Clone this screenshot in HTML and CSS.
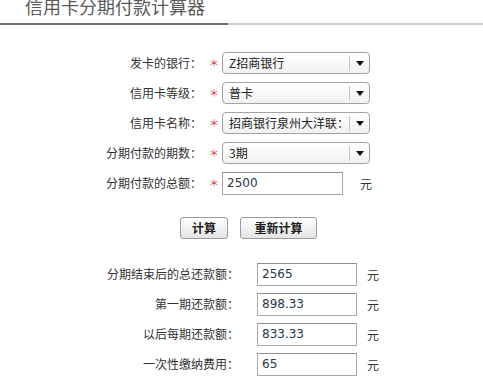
FILE: index.html
```html
<!DOCTYPE html>
<html lang="zh-CN">
<head>
<meta charset="utf-8">
<title>信用卡分期付款计算器</title>
<link rel="stylesheet" href="styles.css">
</head>
<body>
<div class="page">
  <header class="head">
    <h1 class="title">信用卡分期付款计算器</h1>
    <div class="head-rest"></div>
  </header>

  <div class="form">
    <div class="row">
      <span class="lbl">发卡的银行：</span><span class="req">＊</span>
      <div class="select"><span class="sel-text">Z招商银行</span><span class="sel-btn"><svg width="8" height="5" viewBox="0 0 8 5"><path d="M0 0H8L4 5Z" fill="#111"/></svg></span></div>
    </div>
    <div class="row">
      <span class="lbl">信用卡等级：</span><span class="req">＊</span>
      <div class="select"><span class="sel-text">普卡</span><span class="sel-btn"><svg width="8" height="5" viewBox="0 0 8 5"><path d="M0 0H8L4 5Z" fill="#111"/></svg></span></div>
    </div>
    <div class="row">
      <span class="lbl">信用卡名称：</span><span class="req">＊</span>
      <div class="select"><span class="sel-text">招商银行泉州大洋联：</span><span class="sel-btn"><svg width="8" height="5" viewBox="0 0 8 5"><path d="M0 0H8L4 5Z" fill="#111"/></svg></span></div>
    </div>
    <div class="row">
      <span class="lbl">分期付款的期数：</span><span class="req">＊</span>
      <div class="select"><span class="sel-text">3期</span><span class="sel-btn"><svg width="8" height="5" viewBox="0 0 8 5"><path d="M0 0H8L4 5Z" fill="#111"/></svg></span></div>
    </div>
    <div class="row">
      <span class="lbl">分期付款的总额：</span><span class="req">＊</span>
      <div class="field field-in">2500</div><span class="unit">元</span>
    </div>
  </div>

  <div class="actions">
    <button class="btn btn-calc" type="button">计算</button>
    <button class="btn btn-reset" type="button">重新计算</button>
  </div>

  <div class="results">
    <div class="row">
      <span class="lbl2">分期结束后的总还款额：</span>
      <div class="field field-out">2565</div><span class="unit2">元</span>
    </div>
    <div class="row">
      <span class="lbl2">第一期还款额：</span>
      <div class="field field-out">898.33</div><span class="unit2">元</span>
    </div>
    <div class="row">
      <span class="lbl2">以后每期还款额：</span>
      <div class="field field-out">833.33</div><span class="unit2">元</span>
    </div>
    <div class="row">
      <span class="lbl2">一次性缴纳费用：</span>
      <div class="field field-out">65</div><span class="unit2">元</span>
    </div>
  </div>
</div>
</body>
</html>
```

FILE: styles.css
```css
html, body {
  margin: 0;
  padding: 0;
  background: #fff;
}

.page {
  width: 483px;
  font-family: "Noto Sans CJK SC", "Noto Sans", sans-serif;
  font-size: 12px;
  color: #333;
}

.head {
  display: flex;
  height: 25px;
}

.title {
  margin: 0;
  width: 203px;
  padding-left: 25px;
  height: 23px;
  border-bottom: 2px solid #6e6e6e;
  font-size: 18px;
  font-weight: normal;
  line-height: 18px;
  color: #5a5a5a;
  white-space: nowrap;
  overflow: hidden;
}

.title::before {
  content: "";
  display: block;
  margin-top: -3px;
}

.head-rest {
  flex: 1;
  height: 23px;
  border-bottom: 2px solid #cdcdcd;
}

.form {
  margin-top: 23px;
}

.row {
  display: flex;
  align-items: center;
  height: 30px;
}

.lbl {
  width: 202px;
  text-align: right;
  white-space: nowrap;
  line-height: 16px;
}

.req {
  box-sizing: border-box;
  width: 20px;
  padding-left: 4px;
  text-align: center;
  color: #d43c3c;
  font-size: 10px;
  line-height: 12px;
}

.select {
  box-sizing: border-box;
  display: flex;
  align-items: center;
  width: 148px;
  height: 22px;
  border: 1px solid #a3a3a3;
  border-radius: 4px;
  background: linear-gradient(#ffffff, #f1f1f1);
  box-shadow: 0 0 1px rgba(0, 0, 0, 0.08);
  color: #222;
}

.sel-text {
  flex: 1;
  padding-left: 6px;
  white-space: nowrap;
  overflow: hidden;
  line-height: 16px;
}

.sel-btn {
  display: flex;
  align-items: center;
  justify-content: center;
  width: 19px;
  height: 15px;
  border-left: 1px solid #c4c4c4;
}

.sel-btn svg {
  display: block;
}

.field {
  box-sizing: border-box;
  height: 23px;
  border: 1px solid #a9a9a9;
  border-top-color: #8f8f8f;
  background: #fff;
  padding-left: 4px;
  font-family: "DejaVu Sans", sans-serif;
  font-size: 12px;
  line-height: 21px;
  color: #27384a;
}

.field-in {
  width: 121px;
}

.unit {
  margin-left: 17px;
}

.actions {
  display: flex;
  gap: 12px;
  margin-top: 19px;
  padding-left: 180px;
}

.btn {
  box-sizing: border-box;
  height: 22px;
  padding: 0;
  border: 1px solid #9b9b9b;
  border-radius: 3px;
  background: linear-gradient(#ffffff, #e4e4e4);
  font-family: "Noto Sans CJK SC", sans-serif;
  font-size: 12px;
  font-weight: bold;
  color: #1e1e1e;
  line-height: 20px;
}

.btn-calc {
  width: 48px;
}

.btn-reset {
  width: 77px;
}

.results {
  margin-top: 20px;
}

.lbl2 {
  width: 239px;
  text-align: right;
  white-space: nowrap;
  line-height: 16px;
}

.field-out {
  margin-left: 18px;
  width: 100px;
}

.unit2 {
  margin-left: 10px;
}
```
